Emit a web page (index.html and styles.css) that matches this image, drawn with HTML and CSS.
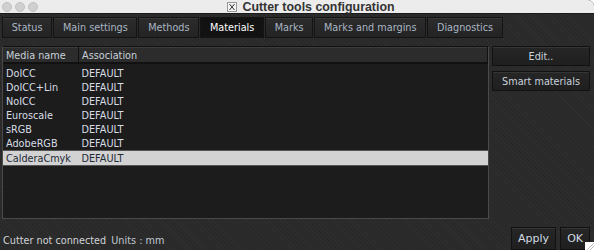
FILE: index.html
```html
<!DOCTYPE html>
<html lang="en">

<head>
  <meta charset="UTF-8" />
  <meta name="viewport" content="width=device-width, initial-scale=1.0" />
  <title>Cutter tools configuration</title>
  <link rel="stylesheet" href="styles.css">
</head>

<body>
  <!-- Dialog window -->
  <div class="window">
    <!-- Title bar with traffic lights -->
    <div class="titlebar">
      <div class="lights">
        <span class="light"></span>
        <span class="light"></span>
        <span class="light"></span>
      </div>
      <div class="title">
        <svg class="x-icon" width="10" height="10" viewBox="0 0 10 10">
          <rect x="0.5" y="0.5" width="9" height="9" fill="#f4f4f4" stroke="#999" />
          <path d="M2.5 2 L7.5 8 M7.5 2 L2.5 8" stroke="#333" stroke-width="1" />
        </svg>
        <span>Cutter tools configuration</span>
      </div>
    </div>

    <!-- Tabs -->
    <div class="tabs">
      <div class="tab">Status</div>
      <div class="tab">Main settings</div>
      <div class="tab">Methods</div>
      <div class="tab active">Materials</div>
      <div class="tab">Marks</div>
      <div class="tab">Marks and margins</div>
      <div class="tab">Diagnostics</div>
    </div>

    <!-- Main content -->
    <div class="content">
      <div class="table-box">
        <table>
          <thead>
            <tr>
              <th class="col-name">Media name</th>
              <th>Association</th>
            </tr>
          </thead>
          <tbody>
            <tr><td>DoICC</td><td>DEFAULT</td></tr>
            <tr><td>DoICC+Lin</td><td>DEFAULT</td></tr>
            <tr><td>NoICC</td><td>DEFAULT</td></tr>
            <tr><td>Euroscale</td><td>DEFAULT</td></tr>
            <tr><td>sRGB</td><td>DEFAULT</td></tr>
            <tr><td>AdobeRGB</td><td>DEFAULT</td></tr>
            <tr class="selected"><td>CalderaCmyk</td><td>DEFAULT</td></tr>
          </tbody>
        </table>
      </div>

      <div class="side">
        <button class="btn wide">Edit..</button>
        <button class="btn wide">Smart materials</button>
      </div>
    </div>

    <!-- Footer -->
    <div class="footer">
      <div class="status">Cutter not connected <span class="units">Units : mm</span></div>
      <div class="actions">
        <button class="btn">Apply</button>
        <button class="btn">OK</button>
      </div>
    </div>

    <div class="grip"></div>
  </div>
</body>

</html>
```

FILE: styles.css
```css
body {
  margin: 0;
  background: #fff;
  font-family: "DejaVu Sans", Verdana, sans-serif;
  font-size: 9.7px;
}

.window {
  position: relative;
  width: 594px;
  height: 250px;
  background: repeating-linear-gradient(45deg, #2e2e2e 0 1px, #292929 1px 3px);
  border-top-right-radius: 6px;
  overflow: hidden;
  display: flex;
  flex-direction: column;
}

/* Title bar */
.titlebar {
  height: 13px;
  background: #ececec;
  border-bottom: 1px solid #1a1a1a;
  display: flex;
  align-items: center;
}

.lights {
  display: flex;
  gap: 3px;
  padding-left: 2px;
}

.light {
  width: 10px;
  height: 10px;
  border-radius: 50%;
  background: #d0d0d0;
  border: 0.5px solid #c0c0c0;
  box-sizing: border-box;
}

.title {
  flex: 1;
  display: flex;
  justify-content: center;
  align-items: center;
  gap: 5px;
  font-family: "Liberation Sans", Arial, sans-serif;
  font-weight: bold;
  font-size: 12.4px;
  color: #333;
  margin-right: 10px;
}

/* Tabs */
.tabs {
  display: flex;
  gap: 1px;
  padding: 3px 2px 0;
  height: 21px;
}

.tab {
  background: linear-gradient(#2c2c2c, #232323);
  border: 1px solid #141414;
  box-shadow: inset 0 1px 0 #3a3a3a;
  color: #a9b6c4;
  padding: 0 8.7px;
  display: flex;
  align-items: center;
}

.tab.active {
  background: #121212;
  box-shadow: none;
  color: #fff;
}

/* Content */
.content {
  display: flex;
  gap: 3px;
  padding: 8px 2px 0;
  height: 173px;
}

.table-box {
  width: 485px;
  background: #1c1c1c;
  border: 1px solid #4a4a4a;
  border-top-color: #111;
}

table {
  width: 100%;
  border-collapse: collapse;
  color: #d8dde4;
}

th {
  text-align: left;
  font-weight: normal;
  height: 14px;
  padding: 0 3px;
  background: #2c2c2c;
  border-top: 1px solid #3c3c3c;
  border-bottom: 2px solid #111;
  border-right: 1px solid #111;
  color: #c8d0d8;
}

.col-name {
  width: 69px;
}

td {
  height: 14px;
  padding: 0 3px;
  white-space: nowrap;
}

tbody tr:first-child td {
  padding-top: 2px;
}

tr.selected td {
  background: #d2d2d2;
  color: #1e2a36;
  border-top: 1px solid #555;
  border-bottom: 1px solid #555;
}

.side {
  display: flex;
  flex-direction: column;
  gap: 5px;
}

.btn {
  font-family: inherit;
  font-size: 9.7px;
  background: linear-gradient(#262626, #1f1f1f);
  color: #c9d2dc;
  border: 1px solid #111;
  box-shadow: inset 0 1px 0 #353535;
  padding: 0 6px;
  height: 21px;
  cursor: pointer;
}

.btn.wide {
  width: 98px;
  height: 20px;
}

/* Footer */
.footer {
  flex: 1;
  display: flex;
  justify-content: space-between;
  align-items: flex-end;
  padding: 0 4px 0 3px;
}

.status {
  color: #d0d4d8;
  padding-bottom: 4px;
}

.units {
  margin-left: 2px;
  color: #c0c8d0;
}

.actions {
  display: flex;
  gap: 4px;
}

.actions .btn {
  height: 23px;
  color: #d2dbe4;
  font-size: 11px;
}

.grip {
  position: absolute;
  right: 0;
  bottom: 0;
  width: 9px;
  height: 8px;
  background: linear-gradient(135deg, #fff 0 55%, #bbb 55% 60%, #fff 60% 75%, #bbb 75% 80%, #fff 80%);
}
```
